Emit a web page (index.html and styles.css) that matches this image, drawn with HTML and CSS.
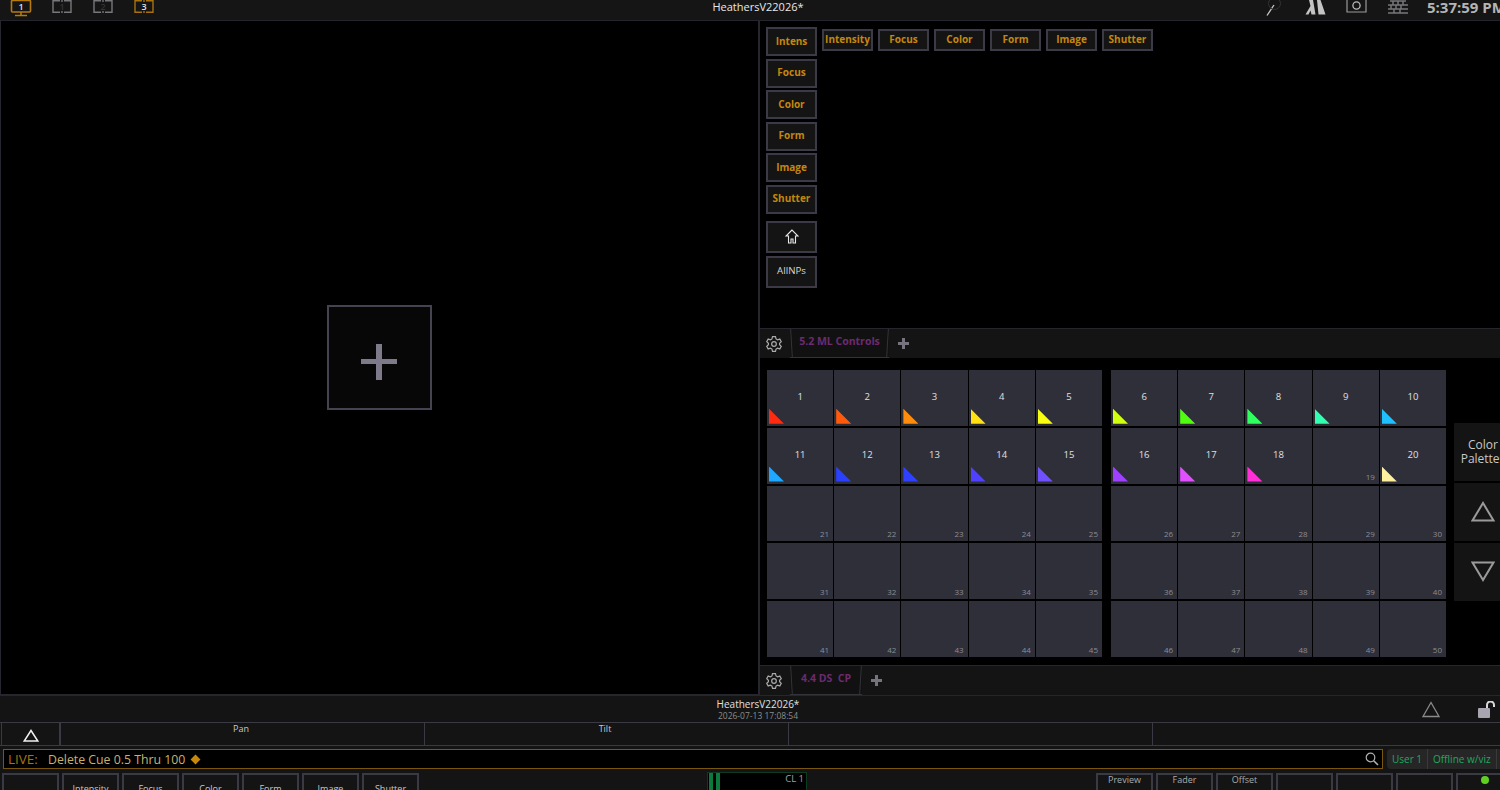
FILE: index.html
```html
<!DOCTYPE html>
<html lang="en">
<head>
    <meta charset="UTF-8">
    <title>HeathersV22026*</title>
    <link rel="stylesheet" href="styles.css">
</head>
<body>
    <div class="topbar">
        <div class="desks">
            <svg class="desk" width="22" height="18" viewBox="0 0 22 18"><rect x="1.500" y="0.500" width="19" height="11.500" rx="1" fill="none" stroke="#b57b10" stroke-width="1.600"/><path d="M11 12v3M5 15.500h12" stroke="#b57b10" stroke-width="1.600"/><text x="11" y="10" text-anchor="middle" class="desk-num">1</text></svg>
            <svg class="desk" width="22" height="18" viewBox="0 0 22 18"><path d="M9 0.700H2v11.600h7M13 0.700h7v11.600h-7M11 0v2M11 11v2" fill="none" stroke="#77777c" stroke-width="1.400"/><text x="11" y="10" text-anchor="middle" class="desk-num dim">1</text></svg>
            <svg class="desk" width="22" height="18" viewBox="0 0 22 18"><path d="M9 0.700H2v11.600h7M13 0.700h7v11.600h-7M11 0v2M11 11v2" fill="none" stroke="#77777c" stroke-width="1.400"/><text x="11" y="10" text-anchor="middle" class="desk-num dim">2</text></svg>
            <svg class="desk" width="22" height="18" viewBox="0 0 22 18"><path d="M9 0.700H2v11.600h7M13 0.700h7v11.600h-7M11 0v2M11 11v2" fill="none" stroke="#a8720f" stroke-width="1.400"/><text x="11" y="10" text-anchor="middle" class="desk-num">3</text></svg>
        </div>
        <div class="show-name">HeathersV22026*</div>
        <div class="status">
            <svg class="st-wand" width="16" height="17" viewBox="0 0 16 17"><path d="M1 15.500 8 5" stroke="#c8c8c8" stroke-width="1.300"/><circle cx="8.500" cy="3.500" r="6" fill="none" stroke="#333"/></svg>
            <svg class="st-x" width="21" height="15" viewBox="0 0 21 15"><path d="M0.500 14.500 5.500 6 4 0h4l2.500 14.500H6.500l-1-4-2 4zM20.500 14.500h-7L12 0h3.500z" fill="#c4c4c4"/></svg>
            <svg class="st-cam" width="21" height="13" viewBox="0 0 21 13"><path d="M1 0v12h19V0" fill="none" stroke="#999" stroke-width="1.200"/><circle cx="10.500" cy="5.500" r="3.600" fill="none" stroke="#bbb" stroke-width="1.300"/></svg>
            <svg class="st-keys" width="20" height="16" viewBox="0 0 20 16"><path d="M2 1h16M0 5h20M0 9h20M0 13h20M5 1v4M10 1v4M15 1v4M3 5v4M8 5v4M13 5v4M6 9v4M12 9v4" stroke="#77777a" stroke-width="1.500"/></svg>
            <div class="clock">5:37:59 PM</div>
        </div>
    </div>

    <div class="main">
        <div class="left-pane">
            <div class="add-box"><span class="plus-big"></span></div>
        </div>
        <div class="right-pane">
            <div class="ml-area">
                <div class="ml-col">
                    <div class="ml-btn">Intens</div>
                    <div class="ml-btn">Focus</div>
                    <div class="ml-btn">Color</div>
                    <div class="ml-btn">Form</div>
                    <div class="ml-btn">Image</div>
                    <div class="ml-btn">Shutter</div>
                    <div class="ml-btn plain first-plain"><svg width="14" height="15" viewBox="0 0 14 15"><path d="M7 1 1 7h2.500v7h2.500v-4h2v4h2.500V7H13z" fill="none" stroke="#e8e8e8" stroke-width="1.100"/></svg></div>
                    <div class="ml-btn plain">AllNPs</div>
                </div>
                <div class="ml-row">
                    <div class="ml-tab">Intensity</div>
                    <div class="ml-tab">Focus</div>
                    <div class="ml-tab">Color</div>
                    <div class="ml-tab">Form</div>
                    <div class="ml-tab">Image</div>
                    <div class="ml-tab">Shutter</div>
                </div>
            </div>

            <div class="tabbar">
                <div class="gear"><svg width="16" height="16" viewBox="0 0 24 24"><path d="M9.800 1h4.400l.9 3.400 2.200 1.200 3.400-1 2.200 3.800-2.500 2.400v2.400l2.500 2.400-2.200 3.800-3.400-1-2.200 1.200-.9 3.400H9.800l-.9-3.400-2.200-1.200-3.400 1-2.200-3.800 2.500-2.400v-2.400L1.100 8.400l2.200-3.800 3.400 1 2.200-1.200z" fill="none" stroke="#aaa" stroke-width="1.800"/><circle cx="12" cy="12" r="3.500" fill="none" stroke="#aaa" stroke-width="1.800"/></svg></div>
                <div class="tab tab-wide">5.2 ML Controls</div>
                <span class="plus-small"></span>
            </div>

            <div class="palette-area">
                <div class="grid">
                    <div class="cell"><span class="lbl">1</span><i class="tri t1"></i></div>
                    <div class="cell"><span class="lbl">2</span><i class="tri t2"></i></div>
                    <div class="cell"><span class="lbl">3</span><i class="tri t3"></i></div>
                    <div class="cell"><span class="lbl">4</span><i class="tri t4"></i></div>
                    <div class="cell"><span class="lbl">5</span><i class="tri t5"></i></div>
                    <div class="cell"><span class="lbl">11</span><i class="tri t11"></i></div>
                    <div class="cell"><span class="lbl">12</span><i class="tri t12"></i></div>
                    <div class="cell"><span class="lbl">13</span><i class="tri t13"></i></div>
                    <div class="cell"><span class="lbl">14</span><i class="tri t14"></i></div>
                    <div class="cell"><span class="lbl">15</span><i class="tri t15"></i></div>
                    <div class="cell empty"><span class="num">21</span></div>
                    <div class="cell empty"><span class="num">22</span></div>
                    <div class="cell empty"><span class="num">23</span></div>
                    <div class="cell empty"><span class="num">24</span></div>
                    <div class="cell empty"><span class="num">25</span></div>
                    <div class="cell empty"><span class="num">31</span></div>
                    <div class="cell empty"><span class="num">32</span></div>
                    <div class="cell empty"><span class="num">33</span></div>
                    <div class="cell empty"><span class="num">34</span></div>
                    <div class="cell empty"><span class="num">35</span></div>
                    <div class="cell empty"><span class="num">41</span></div>
                    <div class="cell empty"><span class="num">42</span></div>
                    <div class="cell empty"><span class="num">43</span></div>
                    <div class="cell empty"><span class="num">44</span></div>
                    <div class="cell empty"><span class="num">45</span></div>
                </div>
                <div class="grid">
                    <div class="cell"><span class="lbl">6</span><i class="tri t6"></i></div>
                    <div class="cell"><span class="lbl">7</span><i class="tri t7"></i></div>
                    <div class="cell"><span class="lbl">8</span><i class="tri t8"></i></div>
                    <div class="cell"><span class="lbl">9</span><i class="tri t9"></i></div>
                    <div class="cell"><span class="lbl">10</span><i class="tri t10"></i></div>
                    <div class="cell"><span class="lbl">16</span><i class="tri t16"></i></div>
                    <div class="cell"><span class="lbl">17</span><i class="tri t17"></i></div>
                    <div class="cell"><span class="lbl">18</span><i class="tri t18"></i></div>
                    <div class="cell empty"><span class="num">19</span></div>
                    <div class="cell"><span class="lbl">20</span><i class="tri t20"></i></div>
                    <div class="cell empty"><span class="num">26</span></div>
                    <div class="cell empty"><span class="num">27</span></div>
                    <div class="cell empty"><span class="num">28</span></div>
                    <div class="cell empty"><span class="num">29</span></div>
                    <div class="cell empty"><span class="num">30</span></div>
                    <div class="cell empty"><span class="num">36</span></div>
                    <div class="cell empty"><span class="num">37</span></div>
                    <div class="cell empty"><span class="num">38</span></div>
                    <div class="cell empty"><span class="num">39</span></div>
                    <div class="cell empty"><span class="num">40</span></div>
                    <div class="cell empty"><span class="num">46</span></div>
                    <div class="cell empty"><span class="num">47</span></div>
                    <div class="cell empty"><span class="num">48</span></div>
                    <div class="cell empty"><span class="num">49</span></div>
                    <div class="cell empty"><span class="num">50</span></div>
                </div>
                <div class="side">
                    <div class="side-btn side-text">Color<br>Palettes</div>
                    <div class="side-btn"><svg width="24" height="21" viewBox="0 0 24 21"><path d="M12 2 1.500 19.500h21z" fill="none" stroke="#9a9a9a" stroke-width="2"/></svg></div>
                    <div class="side-btn"><svg width="24" height="21" viewBox="0 0 24 21"><path d="M12 19 1.500 1.500h21z" fill="none" stroke="#9a9a9a" stroke-width="2"/></svg></div>
                </div>
            </div>

            <div class="tabbar tabbar-low">
                <div class="gear"><svg width="16" height="16" viewBox="0 0 24 24"><path d="M9.800 1h4.400l.9 3.400 2.200 1.200 3.400-1 2.200 3.800-2.500 2.400v2.400l2.500 2.400-2.200 3.800-3.400-1-2.200 1.200-.9 3.400H9.800l-.9-3.400-2.200-1.200-3.400 1-2.200-3.800 2.500-2.400v-2.400L1.100 8.400l2.200-3.800 3.400 1 2.200-1.200z" fill="none" stroke="#aaa" stroke-width="1.800"/><circle cx="12" cy="12" r="3.500" fill="none" stroke="#aaa" stroke-width="1.800"/></svg></div>
                <div class="tab tab-narrow">4.4 DS&nbsp;&nbsp;CP</div>
                <span class="plus-small"></span>
            </div>
        </div>
    </div>

    <div class="footer-title">
        <div class="ft-name">HeathersV22026*</div>
        <div class="ft-date">2026-07-13 17:08:54</div>
        <svg class="ft-tri" width="18" height="17" viewBox="0 0 18 17"><path d="M9 1.500 1 15.500h16z" fill="none" stroke="#8a8a8a" stroke-width="1.300"/></svg>
        <svg class="ft-lock" width="18" height="18" viewBox="0 0 18 18"><rect x="0" y="7" width="12" height="10" rx="1" fill="#a8a4b0"/><path d="M9 7V4a3.500 3.500 0 0 1 7 0v2" fill="none" stroke="#d8d8d8" stroke-width="2"/></svg>
    </div>

    <div class="fader-row">
        <div class="fader-expand"><svg width="16" height="13" viewBox="0 0 16 13"><path d="M8 1.500 1.200 12h13.600z" fill="none" stroke="#f0f0f0" stroke-width="1.500"/></svg></div>
        <div class="fader">Pan</div>
        <div class="fader">Tilt</div>
        <div class="fader"></div>
        <div class="fader last"></div>
    </div>

    <div class="cmd-row">
        <div class="cmd">
            <span class="cmd-live">LIVE:</span>
            <span class="cmd-text">Delete Cue 0.5 Thru 100</span>
            <span class="diamond"></span>
            <svg class="search" width="14" height="14" viewBox="0 0 14 14"><circle cx="5.500" cy="5.500" r="4.300" fill="none" stroke="#b0b0b0" stroke-width="1.200"/><path d="M8.700 8.700 13 13" stroke="#b0b0b0" stroke-width="1.600"/></svg>
        </div>
        <div class="pill">
            <span class="pill-item">User 1</span>
            <span class="pill-item">Offline w/viz</span>
            <svg class="pill-icon" width="10" height="12" viewBox="0 0 10 12"><circle cx="5" cy="6" r="4" fill="none" stroke="#1f9c58" stroke-width="1.400"/></svg>
        </div>
    </div>

    <div class="soft-row">
        <div class="soft-group">
            <div class="soft"></div>
            <div class="soft">Intensity</div>
            <div class="soft">Focus</div>
            <div class="soft">Color</div>
            <div class="soft">Form</div>
            <div class="soft">Image</div>
            <div class="soft">Shutter</div>
        </div>
        <div class="meter">
            <i class="m-bar"></i><i class="m-bar"></i>
            <span class="m-label">CL 1</span>
        </div>
        <div class="soft-group soft-right">
            <div class="soft top">Preview</div>
            <div class="soft top">Fader</div>
            <div class="soft top">Offset</div>
            <div class="soft"></div>
            <div class="soft"></div>
            <div class="soft"></div>
            <div class="soft led-soft"><i class="led"></i></div>
        </div>
    </div>
</body>
</html>
```

FILE: styles.css
```css
* {
    margin: 0;
    padding: 0;
    box-sizing: border-box;
}

body {
    width: 1500px;
    height: 790px;
    overflow: hidden;
    background: #141414;
    color: #d0d0d0;
    font-family: "Open Sans", "Noto Sans", sans-serif;
}

/* top bar */
.topbar {
    height: 21px;
    display: flex;
    align-items: flex-start;
    position: relative;
    background: #151515;
    border-bottom: 1px solid #24242c;
    overflow: hidden;
}

.desks {
    display: flex;
    gap: 19px;
    padding: 0 0 0 10px;
}

.desk-num {
    font-size: 9px;
    font-weight: 600;
    fill: #e0e0e0;
}

.desk-num.dim {
    fill: #33333a;
}

.show-name {
    position: absolute;
    left: 0;
    right: 0;
    top: -1px;
    text-align: center;
    font-size: 11px;
    line-height: 16px;
    color: #e8e8e8;
    padding-left: 16px;
}

.status {
    margin-left: auto;
    display: flex;
    align-items: flex-start;
}

.st-wand { margin-right: 23px; }
.st-x { margin-right: 20px; }
.st-cam { margin-right: 21px; }
.st-keys { margin-right: 19px; }

.clock {
    flex: none;
    font-size: 15px;
    font-weight: 700;
    line-height: 15px;
    color: #b4b4b4;
    white-space: nowrap;
    width: 73px;
}

/* main area */
.main {
    display: flex;
    height: 674px;
}

.left-pane {
    width: 759px;
    background: #000;
    border: 1px solid #26262e;
    border-top: 0;
    display: flex;
    align-items: center;
    justify-content: center;
}

.add-box {
    width: 105px;
    height: 105px;
    margin-right: 1px;
    border: 2px solid #45434f;
    background: #070707;
    display: flex;
    align-items: center;
    justify-content: center;
}

.plus-big {
    width: 36px;
    height: 36px;
    margin-top: 8px;
    background:
        linear-gradient(#7f7a8a, #7f7a8a) center / 6px 36px no-repeat,
        linear-gradient(#7f7a8a, #7f7a8a) center / 36px 5px no-repeat;
}

.right-pane {
    width: 741px;
    background: #000;
    border-left: 1px solid #26262e;
}

.ml-area {
    height: 307px;
    display: flex;
    align-items: flex-start;
    padding: 6px 0 0 6px;
}

.ml-col {
    width: 51px;
    flex: none;
    display: flex;
    flex-direction: column;
    gap: 2.600px;
}

.ml-btn {
    height: 29px;
    background: #141414;
    border: 2px solid #3c3a46;
    color: #c5870d;
    font-size: 10px;
    font-weight: 700;
    padding-bottom: 2px;
    display: flex;
    align-items: center;
    justify-content: center;
}

.ml-btn.plain {
    height: 32px;
    color: #d8d8d8;
    font-weight: 400;
    font-size: 9.700px;
}

.ml-btn.first-plain {
    margin-top: 4.500px;
}

.ml-row {
    display: flex;
    gap: 5px;
    margin: 2px 0 0 5px;
}

.ml-tab {
    width: 51px;
    height: 21.500px;
    background: #141414;
    border: 2px solid #3c3a46;
    color: #c5870d;
    font-size: 10px;
    font-weight: 700;
    padding-bottom: 2px;
    display: flex;
    align-items: center;
    justify-content: center;
}

/* tab bars */
.tabbar {
    height: 30px;
    display: flex;
    align-items: stretch;
    background: #141414;
    border-top: 1px solid #26262e;
}

.gear {
    width: 30px;
    display: flex;
    align-items: center;
    justify-content: center;
    padding-right: 3px;
}

.tab {
    position: relative;
    background: #111;
    border-bottom: 1px solid #33333b;
    color: #6d2a70;
    font-size: 10.500px;
    font-weight: 700;
    line-height: 14px;
    padding-top: 5px;
    text-align: center;
}

.tab::before,
.tab::after {
    content: "";
    position: absolute;
    top: 0;
    bottom: -1px;
    width: 1px;
    background: #33333b;
}

.tab::before {
    left: 1px;
    transform: rotate(-3.500deg);
}

.tab::after {
    right: 1px;
    transform: rotate(3.500deg);
}

.tab-wide { width: 99px; }
.tab-narrow { width: 72px; }

.plus-small {
    width: 11px;
    height: 11px;
    margin: 9px 0 0 9px;
    background:
        linear-gradient(#76727e, #76727e) center / 3px 11px no-repeat,
        linear-gradient(#76727e, #76727e) center / 11px 3px no-repeat;
}

/* palette grids */
.palette-area {
    height: 307px;
    display: flex;
    padding: 12px 0 0 7px;
    gap: 9px;
}

.grid {
    flex: none;
    width: 335px;
    height: 287px;
    display: grid;
    grid-template-columns: repeat(5, 1fr);
    grid-template-rows: repeat(5, 1fr);
    gap: 2px 1px;
}

.cell {
    position: relative;
    background: #2f2f39;
    display: flex;
    justify-content: center;
    padding-top: 20px;
}

.cell.empty {
    justify-content: flex-end;
    align-items: flex-end;
    padding: 0 4px 2px 0;
}

.lbl {
    font-size: 9.500px;
    font-weight: 400;
    line-height: 14px;
    color: #e0e0e0;
}

.num {
    font-size: 8px;
    line-height: 11px;
    color: #8c8c92;
}

.tri {
    position: absolute;
    left: 2px;
    bottom: 2px;
    width: 15px;
    height: 15px;
    clip-path: polygon(0 0, 100% 100%, 0 100%);
}

.t1 { background: #ff2a10; }
.t2 { background: #ff5a0a; }
.t3 { background: #ff8c0a; }
.t4 { background: #ffe010; }
.t5 { background: #f8ff10; }
.t6 { background: #d0ff10; }
.t7 { background: #50ff10; }
.t8 { background: #30ff60; }
.t9 { background: #30ffb0; }
.t10 { background: #20c0ff; }
.t11 { background: #20a8ff; }
.t12 { background: #2a40ff; }
.t13 { background: #3040ff; }
.t14 { background: #5040ff; }
.t15 { background: #7050ff; }
.t16 { background: #a040ff; }
.t17 { background: #e050ff; }
.t18 { background: #ff30d8; }
.t20 { background: #fff0a0; }

.side {
    flex: none;
    width: 58px;
    display: flex;
    flex-direction: column;
    gap: 2.500px;
    margin: 53px 0 0 -1px;
}

.side-btn {
    height: 57.500px;
    background: #141414;
    display: flex;
    align-items: center;
    justify-content: center;
}

.side-text {
    font-size: 12px;
    line-height: 14px;
    color: #c8c8c8;
    text-align: center;
}

/* footer */
.footer-title {
    height: 27px;
    position: relative;
    text-align: center;
    padding-left: 16px;
    border-top: 1px solid #26262e;
}

.ft-name {
    font-size: 10px;
    line-height: 14px;
    color: #e0e0e0;
    padding-top: 1px;
}

.ft-date {
    font-size: 8.500px;
    line-height: 10px;
    color: #8c8c8c;
}

.ft-tri {
    position: absolute;
    left: 1422px;
    top: 5px;
}

.ft-lock {
    position: absolute;
    left: 1478px;
    top: 5px;
}

.fader-row {
    height: 24px;
    display: flex;
    border-top: 1px solid #3a3a44;
    border-bottom: 1px solid #3a3a44;
}

.fader-expand {
    width: 60px;
    margin-left: 1px;
    border-left: 1px solid #3a3a44;
    border-right: 2px solid #3a3a44;
    display: flex;
    align-items: center;
    justify-content: center;
    padding-top: 2px;
}

.fader {
    width: 364px;
    border-right: 1px solid #3a3a44;
    font-size: 9px;
    line-height: 12px;
    padding-right: 3px;
    text-align: center;
    color: #c8c8c8;
}

.fader.last {
    flex: 1;
    border-right: 0;
}

.cmd-row {
    display: flex;
    height: 20px;
    margin-top: 3px;
    padding-left: 3px;
}

.cmd {
    flex: none;
    width: 1380px;
    background: #000;
    border: 1px solid #7a5510;
    display: flex;
    align-items: center;
    padding: 0 4px;
    position: relative;
    white-space: nowrap;
}

.cmd-live {
    font-size: 13.500px;
    color: #a9720f;
    width: 40px;
}

.cmd-text {
    font-size: 12.300px;
    color: #c9b06e;
}

.diamond {
    width: 7px;
    height: 7px;
    margin-left: 7px;
    background: #c5870d;
    transform: rotate(45deg);
}

.search {
    position: absolute;
    right: 3px;
    top: 2px;
}

.pill {
    flex: none;
    display: flex;
    align-items: center;
    margin-left: 4px;
    background: #262626;
    border-radius: 4px;
    height: 20px;
    white-space: nowrap;
}

.pill-item {
    padding: 0 5px;
    font-size: 10px;
    line-height: 20px;
    color: #1fa860;
    border-right: 1px solid #3a3a3a;
}

.pill-icon {
    margin-left: 4px;
}

.soft-row {
    display: flex;
    height: 30px;
    margin-top: 4px;
}

.soft-group {
    flex: none;
    display: flex;
    gap: 3px;
    padding-left: 2px;
}

.soft {
    flex: none;
    width: 57px;
    height: 30px;
    border: 1px solid #3a3a44;
    border-width: 2px 2px 0;
    font-size: 9px;
    line-height: 12px;
    padding-top: 8px;
    text-align: center;
    color: #c8c8c8;
}

.soft.top {
    padding-top: 0;
    line-height: 10px;
    color: #aaa;
}

.meter {
    flex: none;
    width: 100px;
    height: 20px;
    margin-left: 288px;
    margin-top: -1px;
    background: #000;
    border: 1px solid #0c3a22;
    display: flex;
    align-items: flex-start;
    padding-left: 1px;
    gap: 3px;
}

.m-bar {
    width: 4px;
    height: 18px;
    background: #0c7a3c;
}

.m-label {
    margin-left: auto;
    margin-right: 2px;
    font-size: 9.500px;
    line-height: 12px;
    color: #a0a0a0;
}

.soft-right {
    margin-left: 289px;
    padding-left: 0;
}

.led-soft {
    display: flex;
    justify-content: center;
    padding: 1px 0 0;
}

.led {
    width: 8px;
    height: 8px;
    border-radius: 50%;
    background: #5fd022;
}
```
